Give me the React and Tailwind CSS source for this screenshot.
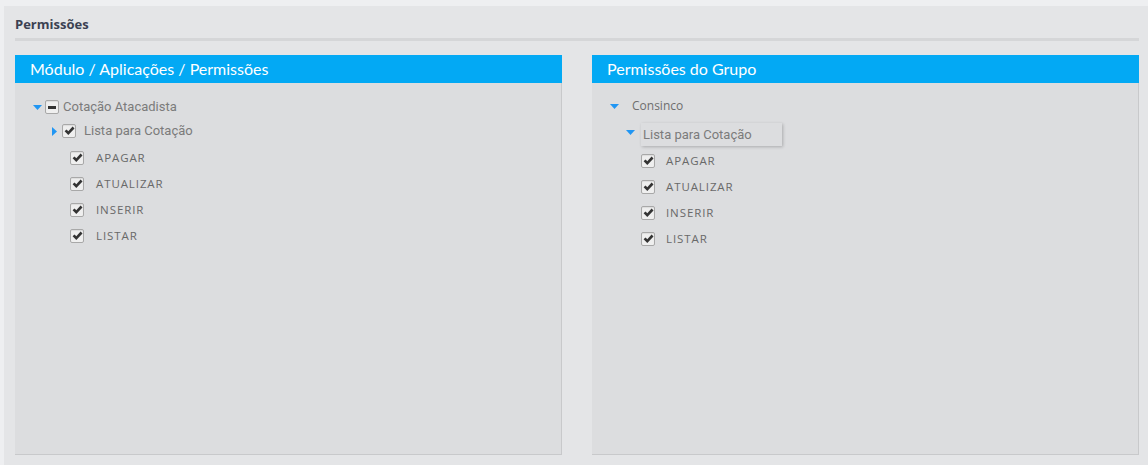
import React from 'react';

const perms = ['APAGAR', 'ATUALIZAR', 'INSERIR', 'LISTAR'];

function Caret({ dir = 'down' }) {
  if (dir === 'right') {
    return (
      <svg width="5" height="9" viewBox="0 0 5 9" className="block">
        <path d="M0 0 L5 4.5 L0 9 Z" fill="#2196f3" />
      </svg>
    );
  }
  return (
    <svg width="9" height="5" viewBox="0 0 9 5" className="block">
      <path d="M0 0 L9 0 L4.5 5 Z" fill="#2196f3" />
    </svg>
  );
}

function Check({ minus = false }) {
  return (
    <span className="flex h-[14px] w-[14px] items-center justify-center rounded-[2px] border border-[#a8a8a8] bg-[#efefef] shadow-[inset_0_1px_1px_rgba(0,0,0,0.08)]">
      {minus ? (
        <span className="block h-[3px] w-[8px] bg-[#333]" />
      ) : (
        <svg width="11" height="10" viewBox="0 0 11 10" className="block">
          <path d="M0.6 5.3 L2.5 3.5 L4.3 5.3 L8.6 0.6 L10.5 2.5 L4.3 9.1 Z" fill="#333" />
        </svg>
      )}
    </span>
  );
}

function Panel({ title, children }) {
  return (
    <div className="flex flex-col">
      <div className="flex h-[28px] items-center bg-[#03a9f4] pl-[15px] font-['Lato',sans-serif] text-[16px] text-white">
        {title}
      </div>
      <div className="h-[372px] border-b border-r border-[#c8c9cb] bg-[#dcdddf]">{children}</div>
    </div>
  );
}

function PermRows({ boxLeft, textGap, top }) {
  return (
    <div style={{ marginTop: top }}>
      {perms.map(p => (
        <div key={p} className="flex h-[26px] items-center" style={{ paddingLeft: boxLeft }}>
          <Check />
          <span
            className="font-['Open_Sans',sans-serif] text-[11.5px] tracking-[0.9px] text-[#696969]"
            style={{ marginLeft: textGap }}
          >
            {p}
          </span>
        </div>
      ))}
    </div>
  );
}

export default function App() {
  return (
    <div className="h-[465px] w-[1148px] overflow-hidden bg-[#eeeff1] pl-[4px] pt-[6px]">
      <div className="flex h-full flex-col bg-[#e4e5e7] pl-[11px] pr-[9px]">
        <div className="flex h-[32px] items-end pb-[4px] font-['Open_Sans',sans-serif] text-[13px] font-bold text-[#3b4152]">
          Permissões
        </div>
        <div className="h-[3px] bg-[#d5d6d8]" />
        <div className="mt-[14px] grid grid-cols-2 gap-[30px]">
          <Panel title="Módulo / Aplicações / Permissões">
            <div className="pt-[12px] font-['Roboto',sans-serif] text-[13px] text-[#7b7b7b]">
              <div className="flex h-[24px] items-center pl-[18px]">
                <Caret />
                <span className="ml-[3px]"><Check minus /></span>
                <span className="ml-[4px]">Cotação Atacadista</span>
              </div>
              <div className="flex h-[24px] items-center pl-[37px]">
                <Caret dir="right" />
                <span className="ml-[5px]"><Check /></span>
                <span className="ml-[8px]">Lista para Cotação</span>
              </div>
              <PermRows boxLeft={55} textGap={12} top={2} />
            </div>
          </Panel>
          <Panel title="Permissões do Grupo">
            <div className="pt-[11px] font-['Roboto',sans-serif] text-[13px] text-[#7b7b7b]">
              <div className="flex h-[24px] items-center pl-[18px]">
                <Caret />
                <span className="ml-[13px] font-['Open_Sans',sans-serif] text-[12px] text-[#6e6e6e]">Consinco</span>
              </div>
              <div className="flex pl-[34px] pt-[5px]">
                <span className="mt-[7px]"><Caret /></span>
                <span className="ml-[6px] flex h-[23px] w-[141px] items-center pl-[2px] shadow-[1px_1px_3px_rgba(0,0,0,0.22)]">
                  Lista para Cotação
                </span>
              </div>
              <PermRows boxLeft={49} textGap={11} top={2} />
            </div>
          </Panel>
        </div>
      </div>
    </div>
  );
}
